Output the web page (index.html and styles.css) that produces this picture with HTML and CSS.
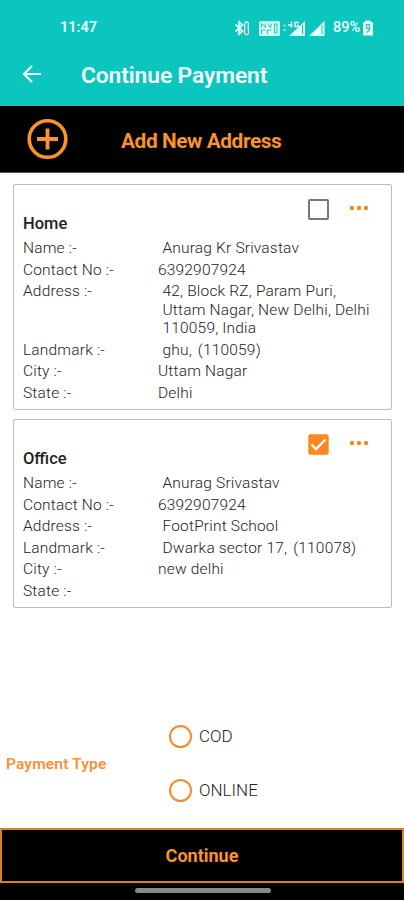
FILE: index.html
```html
<!DOCTYPE html>
<html lang="en">
<head>
<meta charset="utf-8">
<title>Continue Payment</title>
<link rel="stylesheet" href="styles.css">
</head>
<body>
<div class="screen">
  <header class="top">
    <div class="status">
      <span class="time">11:47</span>
      <svg class="status-icons" width="93" height="18" viewBox="0 0 93 18" fill="none">
        <path d="M1.500 5.500l7 6.500-3.500 3V3l3.500 3-7 6.500" stroke="#dcfffc" stroke-width="1.800"/>
        <rect x="10.700" y="3" width="3.600" height="12.500" rx="1.500" stroke="#dcfffc" stroke-width="1.300"/>
        <path d="M12.500 11.500v3" stroke="#e05a50" stroke-width="2"/>
        <rect x="25" y="2" width="21" height="15" rx="1.500" fill="#d4fbf8"/>
        <path d="M27.500 8.500V4.500l4 4v-4M34 4.500l2 4 2-4M27.500 15v-4h4M33.500 15v-4h4M40.500 5h2.500v9h-2.500z" stroke="#2cc5bf" stroke-width="1"/>
        <path d="M49 6.500h3M49 11h3" stroke="#8ae6e1" stroke-width="1.500"/>
        <path d="M55 17L71 2v15z" fill="#e5fffd"/>
        <path d="M54 6h4.500M57.500 2.500v6M65 3.500h-4v4h3V5.500" stroke="#e5fffd" stroke-width="1.400"/>
        <path d="M68.500 6v9" stroke="#0bc5bf" stroke-width="1"/>
        <path d="M75 17L90.500 2v15z" fill="#e5fffd"/>
        <path d="M88 6v9" stroke="#0bc5bf" stroke-width="1"/>
      </svg>
      <span class="battery">89%</span>
      <svg class="battery-icon" width="12" height="18" viewBox="0 0 12 18" fill="none">
        <path d="M3.500 1.500h5v1.500h2.500v13.500H1V3h2.500z" fill="#e5fffd"/>
        <path d="M7.500 9.500H4.500v-4h3v5L5 13.500" stroke="#2cc5bf" stroke-width="1.200"/>
      </svg>
    </div>
    <div class="bar">
      <svg class="back" width="20" height="20" viewBox="0 0 20 20" fill="none" stroke="#f2ffff" stroke-width="2.200"><path d="M19 10H3M10 2l-8 8 8 8"/></svg>
      <h1>Continue Payment</h1>
    </div>
  </header>
  <div class="add">
    <svg class="plus" width="42" height="42" viewBox="0 0 42 42" fill="none" stroke="#fb932d"><circle cx="20.500" cy="21" r="18.300" stroke-width="3.600"/><path d="M10 21h21M20.500 10.500v21" stroke-width="3.800"/></svg>
    <span class="add-label">Add New Address</span>
  </div>
  <main>
    <section class="card">
      <div class="tools">
        <span class="check"></span>
        <svg class="dots" width="20" height="6" viewBox="0 0 20 6" fill="#f98618"><circle cx="3" cy="3" r="2.200"/><circle cx="10" cy="3" r="2.200"/><circle cx="17" cy="3" r="2.200"/></svg>
      </div>
      <h2>Home</h2>
      <dl>
        <dt>Name :-</dt><dd class="in">Anurag Kr Srivastav</dd>
        <dt>Contact No :-</dt><dd>6392907924</dd>
        <dt>Address :-</dt><dd class="in">42, Block RZ, Param Puri,<br>Uttam Nagar, New Delhi, Delhi<br>110059, India</dd>
        <dt>Landmark :-</dt><dd class="in">ghu,<i></i>(110059)</dd>
        <dt>City :-</dt><dd>Uttam Nagar</dd>
        <dt>State :-</dt><dd>Delhi</dd>
      </dl>
    </section>
    <section class="card">
      <div class="tools">
        <svg class="checked" width="21" height="21" viewBox="0 0 21 21"><rect x=".3" y=".3" width="20.400" height="20.400" rx="2" fill="#fb8820"/><path d="M3.500 10.500l4.500 4.500L17.500 5.500" fill="none" stroke="#fff" stroke-width="2.300"/></svg>
        <svg class="dots" width="20" height="6" viewBox="0 0 20 6" fill="#f98618"><circle cx="3" cy="3" r="2.200"/><circle cx="10" cy="3" r="2.200"/><circle cx="17" cy="3" r="2.200"/></svg>
      </div>
      <h2>Office</h2>
      <dl>
        <dt>Name :-</dt><dd class="in">Anurag Srivastav</dd>
        <dt>Contact No :-</dt><dd>6392907924</dd>
        <dt>Address :-</dt><dd class="in">FootPrint School</dd>
        <dt>Landmark :-</dt><dd class="in">Dwarka sector 17,<i></i>(110078)</dd>
        <dt>City :-</dt><dd>new delhi</dd>
        <dt>State :-</dt><dd></dd>
      </dl>
    </section>
  </main>
  <div class="pay">
    <span class="pay-label">Payment Type</span>
    <div class="options">
      <div class="option"><span class="radio"></span>COD</div>
      <div class="option"><span class="radio"></span>ONLINE</div>
    </div>
  </div>
  <div class="continue">Continue</div>
  <div class="nav"><span class="pill"></span></div>
</div>
</body>
</html>
```
FILE: styles.css
```css
* { box-sizing: border-box; }
body { margin: 0; background: #fff; font-family: Roboto, sans-serif; color: #222; }
.screen { width: 404px; height: 900px; display: flex; flex-direction: column; overflow: hidden; }
svg { display: block; flex: none; }
.top { height: 106px; background: #0bc5bf; color: #f2ffff; flex: none; }
.status { height: 36px; padding: 19px 0 0 60px; display: flex; align-items: center; }
.time { font-size: 14.5px; font-weight: 600; width: 174px; line-height: 18px; }
.battery { font-size: 14.5px; font-weight: 500; margin-left: 6px; width: 29px; line-height: 18px; white-space: nowrap; }
.bar { height: 76px; display: flex; align-items: center; padding-left: 22px; }
h1 { margin: 0 0 0 39px; font-size: 22.8px; font-weight: 600; line-height: 28px; letter-spacing: -.1px; white-space: nowrap; padding-top: 3px; }
.add { height: 67px; background: #000; display: flex; align-items: center; padding-left: 27px; flex: none; color: #fb932d; border-bottom: 1px solid #555; }
.add-label { margin-left: 52px; font-size: 20.8px; letter-spacing: -.4px; font-weight: 700; padding-top: 3px; white-space: nowrap; }
main { padding: 11px 12px 0 13px; display: flex; flex-direction: column; gap: 9px; flex: none; }
.card { border: 1px solid #bcbcbc; border-radius: 2px; padding: 14px 14px 5px 9px; }
.tools { height: 21px; display: flex; align-items: flex-start; padding-left: 285px; gap: 20px; }
.check { width: 21px; height: 21px; border: 2px solid #777; border-radius: 2px; flex: none; }
.dots { margin-top: 6px; }
h2 { margin: -6px 0 5px; font-size: 16.5px; line-height: 20px; font-weight: 500; color: #222; }
dl { margin: 0; display: grid; grid-template-columns: 135px 1fr; font-size: 15.5px; line-height: 18.5px; row-gap: 3px; padding-bottom: 2px; }
dt, dd { margin: 0; font-weight: 300; white-space: nowrap; min-height: 18.5px; letter-spacing: .18px; }
dd.in { padding-left: 4.5px; }
i { display: inline-block; width: 6px; }
.pay { flex: 1; display: flex; padding: 0 0 26px 6px; align-items: flex-end; }
.pay-label { width: 163px; color: #f5913a; font-size: 15.5px; letter-spacing: .15px; font-weight: 600; line-height: 20px; margin-bottom: 28px; }
.options { display: flex; flex-direction: column; gap: 30px; }
.option { display: flex; align-items: center; height: 24px; font-size: 17px; font-weight: 300; }
.radio { width: 23px; height: 23px; border: 2px solid #f58b2c; border-radius: 50%; margin-right: 7px; }
.continue { height: 55px; background: #000; border: 2px solid #d98025; color: #fb932d; font-size: 18px; font-weight: 700; display: flex; align-items: center; justify-content: center; flex: none; }
.nav { height: 17px; background: #000; display: flex; justify-content: center; padding: 5px 0 0 2px; flex: none; }
.pill { width: 136px; height: 5px; border-radius: 3px; background: #888; }
```
